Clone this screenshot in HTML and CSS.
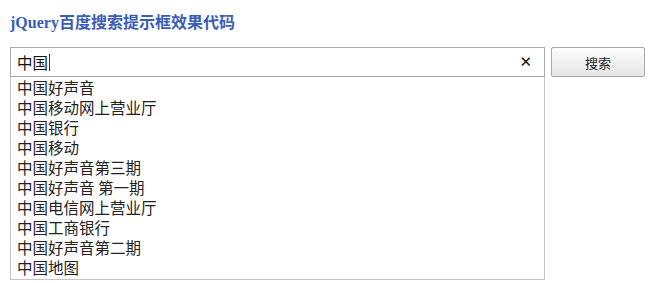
FILE: index.html
```html
<!DOCTYPE html>
<html lang="zh-CN">
<head>
<meta charset="utf-8">
<title>jQuery百度搜索提示框效果代码</title>
<link rel="stylesheet" href="styles.css">
</head>
<body>
<h1 class="title">jQuery百度搜索提示框效果代码</h1>
<div class="row">
  <div class="search">
    <div class="input">
      <span class="value">中国</span><span class="caret"></span>
      <span class="clear">✕</span>
    </div>
    <ul class="suggest">
      <li>中国好声音</li>
      <li>中国移动网上营业厅</li>
      <li>中国银行</li>
      <li>中国移动</li>
      <li>中国好声音第三期</li>
      <li>中国好声音 第一期</li>
      <li>中国电信网上营业厅</li>
      <li>中国工商银行</li>
      <li>中国好声音第二期</li>
      <li>中国地图</li>
    </ul>
  </div>
  <button class="btn">搜索</button>
</div>
</body>
</html>
```
FILE: styles.css
```css
html, body {
  margin: 0;
  padding: 0;
  background: #fff;
}
body {
  padding: 0 0 0 10px;
  font-family: "Noto Sans CJK SC", "Noto Sans", sans-serif;
}
.title {
  margin: 14px 0 16px;
  height: 17px;
  line-height: 17px;
  font-family: "Liberation Serif", "Noto Sans CJK SC", serif;
  font-size: 16px;
  font-weight: bold;
  color: #3a5cb8;
}
.row {
  display: flex;
  align-items: flex-start;
  gap: 6px;
}
.search {
  flex: 0 0 535px;
  width: 535px;
}
.input {
  height: 28px;
  border: 1px solid #a9a9a9;
  display: flex;
  align-items: center;
  padding: 0 0 0 6px;
  font-size: 15.5px;
  color: #111;
}
.value {
  line-height: 28px;
}
.caret {
  width: 1px;
  height: 17px;
  background: #333;
  margin-left: 1px;
}
.clear {
  margin-left: auto;
  margin-right: 12px;
  font-family: "DejaVu Sans", sans-serif;
  font-size: 15px;
  font-weight: bold;
  color: #111;
}
.suggest {
  margin: 0;
  padding: 0 0 2px;
  list-style: none;
  border: 1px solid #c4c4c4;
  border-top: none;
  background: #fff;
}
.suggest li {
  height: 20px;
  line-height: 20px;
  padding-left: 6px;
  font-size: 15.5px;
  color: #222;
  white-space: nowrap;
}
.btn {
  flex: 0 0 94px;
  width: 94px;
  height: 30px;
  border: 1px solid #a8a8a8;
  border-radius: 2px;
  background: linear-gradient(#fdfdfd, #e6e6e6);
  font-family: "Noto Sans CJK SC", sans-serif;
  font-size: 13px;
  color: #222;
  padding: 0;
}
```
